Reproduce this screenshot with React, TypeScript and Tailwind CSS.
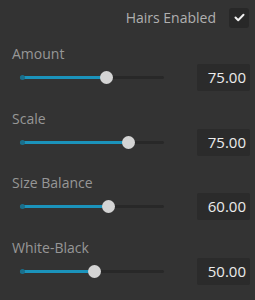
import React from 'react';

const sliders = [
  { label: 'Amount', value: '75.00', thumb: 86 },
  { label: 'Scale', value: '75.00', thumb: 108 },
  { label: 'Size Balance', value: '60.00', thumb: 88 },
  { label: 'White-Black', value: '50.00', thumb: 74 },
];

const Slider = ({ thumb }: { thumb: number }) => (
  <div className="relative w-[144px] h-[13px] ml-[8px]">
    <div className="absolute left-0 right-0 top-[5px] h-[3px] rounded-full bg-[#282828]" />
    <div className="absolute left-0 top-[5px] h-[3px] rounded-full bg-[#1b93bb]" style={{ width: thumb }} />
    <div className="absolute left-0 top-[4px] w-[5px] h-[5px] rounded-full bg-[#1a6f8c]" />
    <div
      className="absolute top-0 w-[13px] h-[13px] rounded-full bg-[#d4d4d4]"
      style={{ left: thumb - 6 }}
    />
  </div>
);

export default function App() {
  return (
    <div className="w-[255px] h-[300px] bg-[#333333] text-[13px] overflow-hidden" style={{ fontFamily: '"Open Sans", sans-serif' }}>
      <div className="flex items-center justify-end gap-[13px] pr-[6px] pt-[5px] h-[25px] box-content">
        <span className="text-[#b0b0b0] text-[14px]">Hairs Enabled</span>
        <div className="w-[20px] h-[20px] rounded-[3px] bg-[#282828] flex items-center justify-center">
          <svg width="11" height="9" viewBox="0 0 11 9" fill="none">
            <path d="M1.5 4.5 L4.2 7.2 L9.5 1.8" stroke="#f0f0f0" strokeWidth="2" strokeLinecap="round" strokeLinejoin="round" />
          </svg>
        </div>
      </div>
      <div className="flex flex-col pt-[16px] pl-[12px] pr-[5px] gap-[19.5px]">
        {sliders.map(s => (
          <div key={s.label} className="flex flex-col gap-[2px]">
            <div className="text-[#979797] text-[14px] leading-[16px]">{s.label}</div>
            <div className="flex items-center justify-between">
              <Slider thumb={s.thumb} />
              <div className="w-[53px] h-[27px] bg-[#2b2b2b] rounded-[2px] flex items-center justify-end pr-[4px] text-[#ececec] text-[15px]">
                {s.value}
              </div>
            </div>
          </div>
        ))}
      </div>
    </div>
  );
}
